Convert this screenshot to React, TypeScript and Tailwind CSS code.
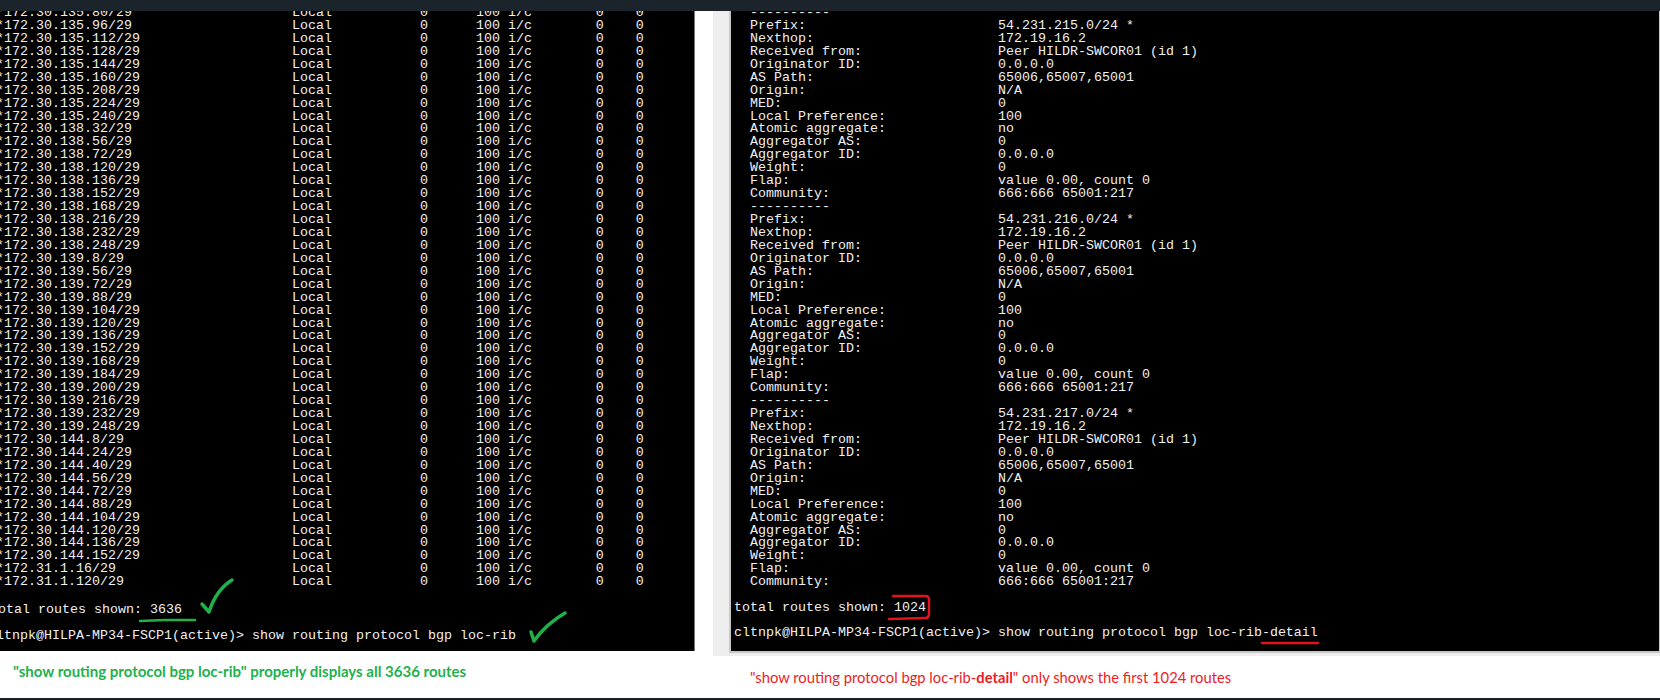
const ROUTES = [
  "172.30.135.80/29", "172.30.135.96/29", "172.30.135.112/29", "172.30.135.128/29", "172.30.135.144/29",
  "172.30.135.160/29", "172.30.135.208/29", "172.30.135.224/29", "172.30.135.240/29",
  "172.30.138.32/29", "172.30.138.56/29", "172.30.138.72/29", "172.30.138.120/29", "172.30.138.136/29",
  "172.30.138.152/29", "172.30.138.168/29", "172.30.138.216/29", "172.30.138.232/29", "172.30.138.248/29",
  "172.30.139.8/29", "172.30.139.56/29", "172.30.139.72/29", "172.30.139.88/29", "172.30.139.104/29",
  "172.30.139.120/29", "172.30.139.136/29", "172.30.139.152/29", "172.30.139.168/29", "172.30.139.184/29",
  "172.30.139.200/29", "172.30.139.216/29", "172.30.139.232/29", "172.30.139.248/29",
  "172.30.144.8/29", "172.30.144.24/29", "172.30.144.40/29", "172.30.144.56/29", "172.30.144.72/29",
  "172.30.144.88/29", "172.30.144.104/29", "172.30.144.120/29", "172.30.144.136/29", "172.30.144.152/29",
  "172.31.1.16/29", "172.31.1.120/29",
];

const routeLine = (route: string) =>
  ("*" + route).padEnd(37) + "Local".padEnd(16) + "0".padEnd(7) + "100 i/c".padEnd(15) + "0".padEnd(5) + "0";

const detailBlock = (prefix: string) => [
  ["Prefix:", prefix + " *"],
  ["Nexthop:", "172.19.16.2"],
  ["Received from:", "Peer HILDR-SWCOR01 (id 1)"],
  ["Originator ID:", "0.0.0.0"],
  ["AS Path:", "65006,65007,65001"],
  ["Origin:", "N/A"],
  ["MED:", "0"],
  ["Local Preference:", "100"],
  ["Atomic aggregate:", "no"],
  ["Aggregator AS:", "0"],
  ["Aggregator ID:", "0.0.0.0"],
  ["Weight:", "0"],
  ["Flap:", "value 0.00, count 0"],
  ["Community:", "666:666 65001:217"],
];

const PREFIXES = ["54.231.215.0/24", "54.231.216.0/24", "54.231.217.0/24"];

function TermLine({ children }: { children: string }) {
  return <div className="h-[12.95px] whitespace-pre">{children}</div>;
}

export default function App() {
  return (
    <div className="relative flex h-[700px] w-[1660px] flex-col overflow-hidden bg-white">
      <div className="h-[11px] shrink-0 bg-[#1b232b]" />

      <div className="flex min-h-0 flex-1">
        {/* Left capture */}
        <div className="flex w-[695px] shrink-0 flex-col">
          <div className="h-[640px] shrink-0 overflow-hidden border-r border-[#777] bg-black pl-[4px] font-['Liberation_Mono',monospace] text-[13.33px] leading-[12.95px] text-[#f0f0f0]">
            <div className="-ml-[8px] -mt-[4px]">
              {ROUTES.map((route) => (
                <TermLine key={route}>{routeLine(route)}</TermLine>
              ))}
              <div className="-ml-[6px] mt-[15px]">
                <TermLine>total routes shown: 3636</TermLine>
              </div>
              <div className="-ml-[8px] mt-[13px]">
                <TermLine>cltnpk@HILPA-MP34-FSCP1(active)&gt; show routing protocol bgp loc-rib</TermLine>
              </div>
            </div>
          </div>
          <p className="pl-[13px] pt-[10px] font-['Lato',sans-serif] text-[15px] leading-[20px] font-bold text-[#22b14c]">
            "show routing protocol bgp loc-rib" properly displays all 3636 routes
          </p>
        </div>

        {/* Right capture */}
        <div className="flex min-w-0 flex-1 flex-col">
          <div className="ml-[18px] h-[645px] shrink-0 bg-[#eeeeee] pl-[16px]">
            <div className="h-[642px] overflow-hidden border-b-2 border-l-2 border-r border-[#c8c8c8] bg-black font-['Liberation_Mono',monospace] text-[13.33px] leading-[12.95px] text-[#f0f0f0]">
              <div className="-mt-[4px] pl-[3px]">
                {PREFIXES.map((prefix) => (
                  <div key={prefix}>
                    <TermLine>{"  ----------"}</TermLine>
                    {detailBlock(prefix).map(([label, value]) => (
                      <TermLine key={label}>{("  " + label).padEnd(33) + value}</TermLine>
                    ))}
                  </div>
                ))}
                <div className="mt-[13px]">
                  <TermLine>total routes shown: 1024</TermLine>
                </div>
                <div className="mt-[12px]">
                  <TermLine>cltnpk@HILPA-MP34-FSCP1(active)&gt; show routing protocol bgp loc-rib-detail</TermLine>
                </div>
              </div>
            </div>
          </div>
          <p className="pl-[55px] pt-[11px] font-['Lato',sans-serif] text-[14.75px] leading-[20px] text-[#ed1c24]">
            "show routing protocol bgp loc-rib-<span className="font-bold">detail</span>" only shows the first 1024 routes
          </p>
        </div>
      </div>

      <div className="h-[2px] shrink-0 bg-[#1b232b]" />

      {/* Hand-drawn annotations */}
      <svg className="absolute inset-0 h-[700px] w-[1660px]" viewBox="0 0 1660 700" fill="none" strokeLinecap="round" strokeLinejoin="round">
        <path d="M202 604 L209 612 Q216 590 232 580" stroke="#1fb14a" strokeWidth="3.5" />
        <path d="M140 621 L165 620 L195 620" stroke="#1fb14a" strokeWidth="2.5" />
        <path d="M531 632 L534 641 Q546 624 565 613" stroke="#1fb14a" strokeWidth="3.5" />
        <path d="M893 596 L925 596 Q929 596 929 600 L929 614 Q929 618 925 618 L889 619" stroke="#e0141f" strokeWidth="2.5" />
        <path d="M1262 643 L1318 643" stroke="#e0141f" strokeWidth="2.5" />
      </svg>
    </div>
  );
}
